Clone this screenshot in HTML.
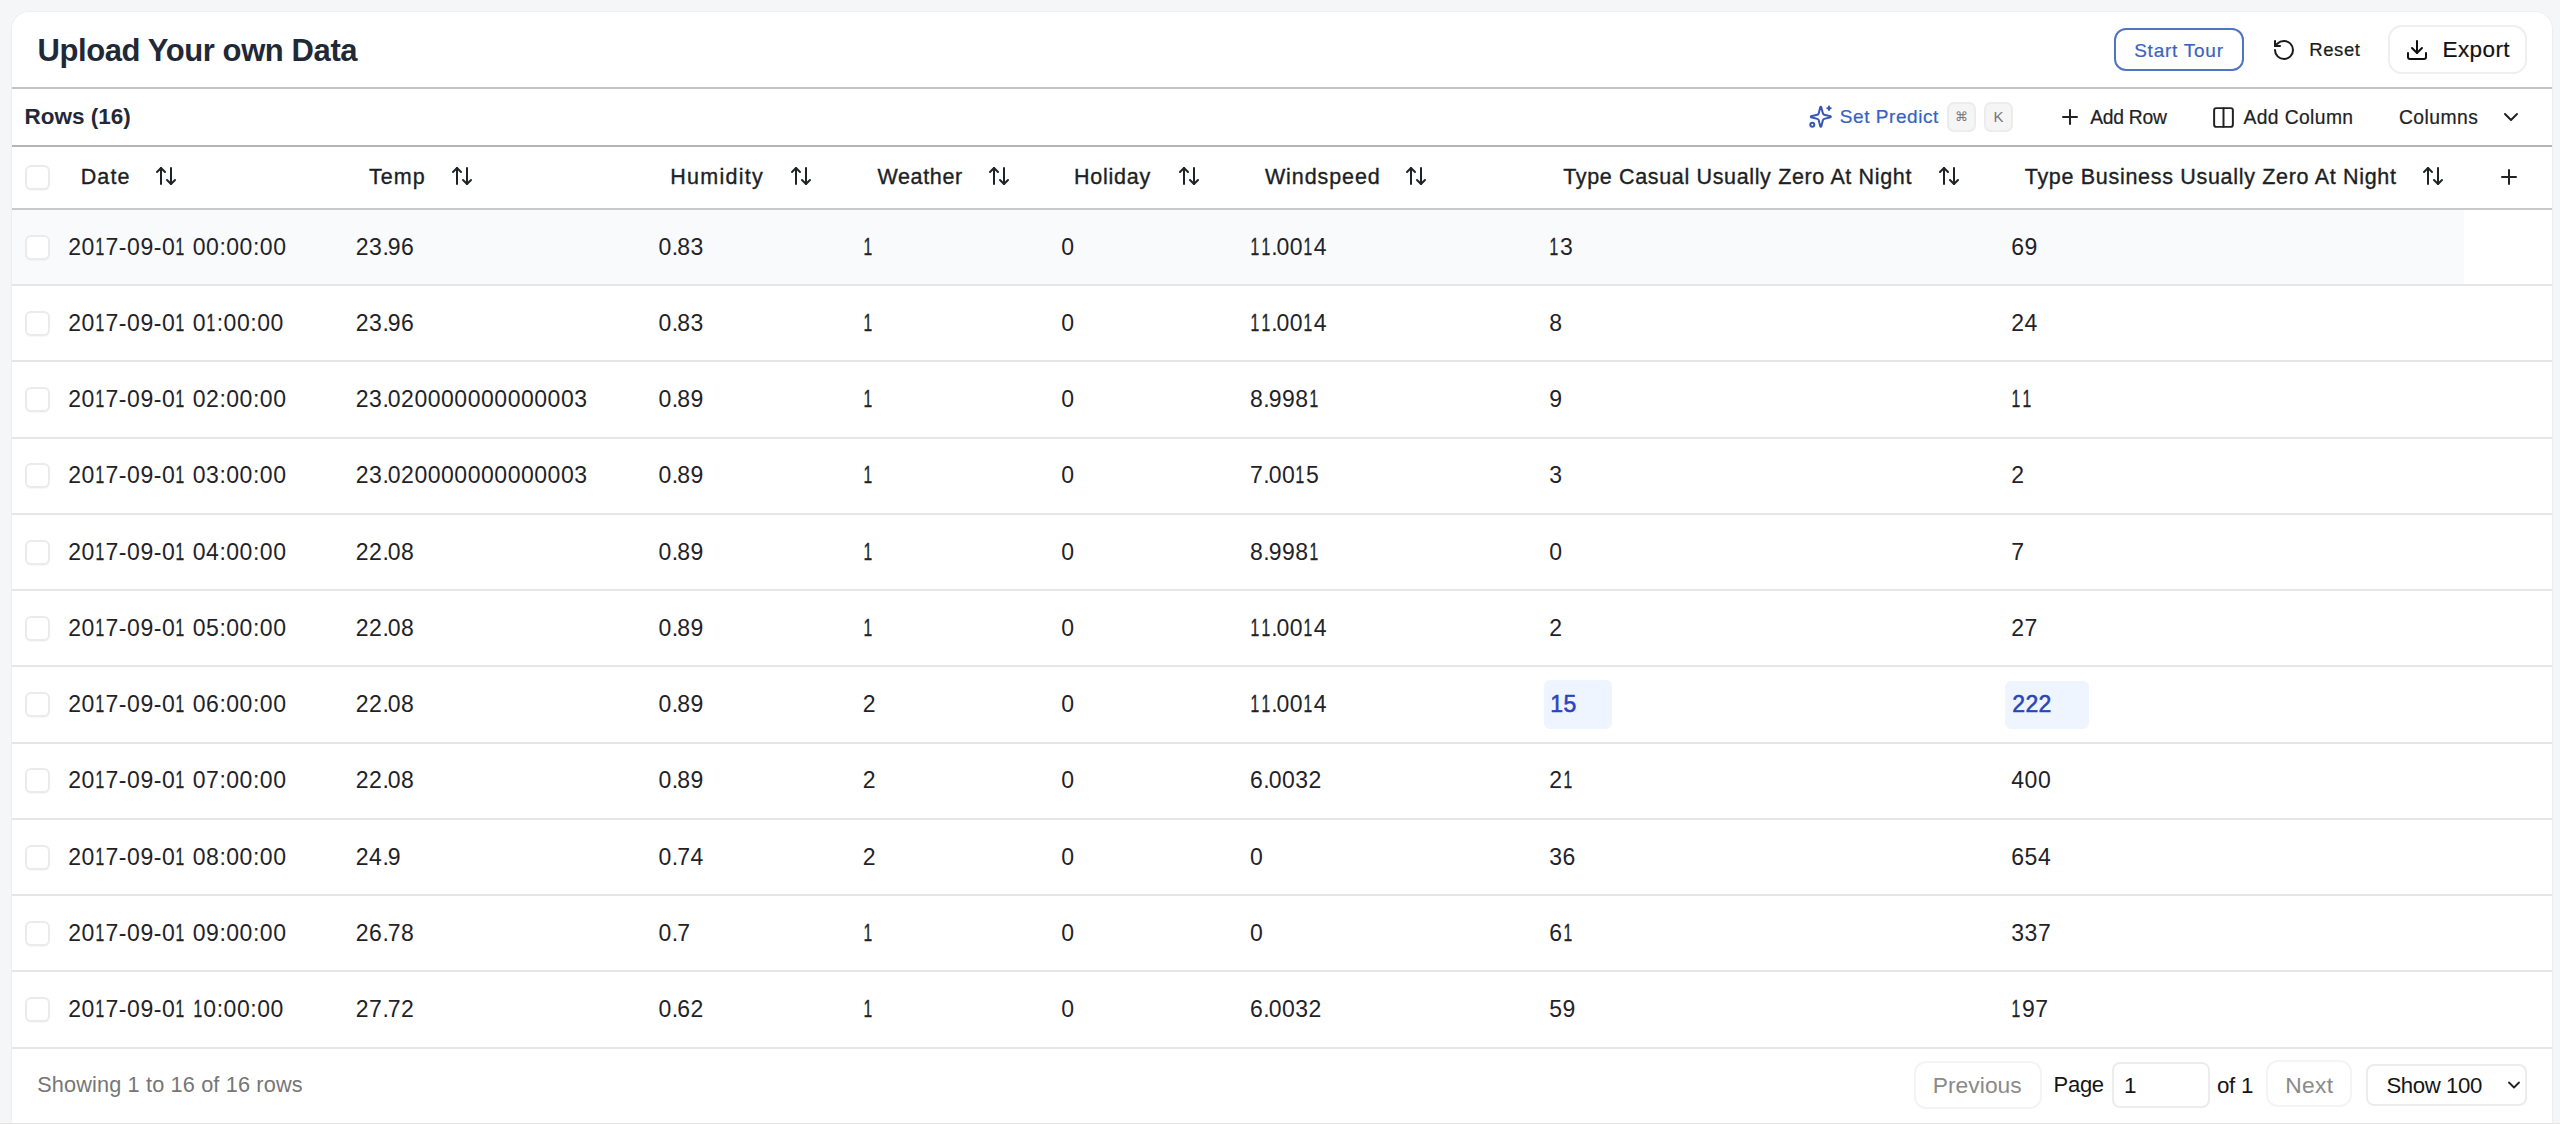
<!DOCTYPE html>
<html><head><meta charset="utf-8"><title>Upload Your own Data</title>
<style>
html,body{margin:0;padding:0;}
body{width:2560px;height:1124px;overflow:hidden;background:#f5f6f7;position:relative;font-family:"Liberation Sans",sans-serif;}
.card{position:absolute;left:12px;top:12px;width:2540px;height:1140px;background:#fff;border-radius:17px;
 box-shadow:0 0 0 1px rgba(0,0,0,0.022),0 1px 3px rgba(0,0,0,0.03);}
.bline{position:absolute;left:0;top:1123px;width:2560px;height:1px;background:#e4e4e4;}
.t{position:absolute;white-space:nowrap;}
.ic{position:absolute;}
.hl{position:absolute;height:1px;}
.cb{position:absolute;left:25px;width:21px;height:21px;border:2px solid #ebebeb;border-radius:6px;background:#fff;box-shadow:0 1px 1px rgba(0,0,0,0.035);}
.box{position:absolute;box-sizing:border-box;}
.o{display:inline-block;width:10.6px;}
.o i{display:inline-block;font-style:normal;letter-spacing:0;transform:translateX(0.6px) scaleX(0.68);transform-origin:0 0;-webkit-text-stroke:0.35px currentColor;}
</style></head><body>
<div class="card"></div>

<div class="t" style="left:37.40px;top:32.26px;font-size:31px;line-height:37px;letter-spacing:-0.4px;color:#1f2937;font-weight:700;">Upload Your own Data</div>
<div class="box" style="left:2114px;top:28px;width:130px;height:43px;border:2px solid #5173c3;border-radius:12px;"></div>
<div class="t" style="left:2134.20px;top:38.52px;font-size:19px;line-height:23px;letter-spacing:0.75px;color:#3a63c0;font-weight:400;-webkit-text-stroke:0.2px #3a63c0;">Start Tour</div>
<svg class="ic" style="left:2272px;top:38px" width="24" height="24" viewBox="0 0 24 24" fill="none" stroke="#1a1a1a" stroke-width="2" stroke-linecap="round" stroke-linejoin="round"><path d="M3 12a9 9 0 1 0 9-9 9.75 9.75 0 0 0-6.74 2.74L3 8"/><path d="M3 3v5h5"/></svg>
<div class="t" style="left:2309.20px;top:39.39px;font-size:18.5px;line-height:22px;letter-spacing:0.6px;color:#1a1a1a;font-weight:400;-webkit-text-stroke:0.2px #1a1a1a;">Reset</div>
<div class="box" style="left:2388px;top:25px;width:139px;height:49px;border:2px solid #efefef;border-radius:14px;"></div>
<svg class="ic" style="left:2405px;top:38px" width="24" height="24" viewBox="0 0 24 24" fill="none" stroke="#111" stroke-width="2" stroke-linecap="round" stroke-linejoin="round"><path d="M21 15v4a2 2 0 0 1-2 2H5a2 2 0 0 1-2-2v-4"/><polyline points="7 10 12 15 17 10"/><line x1="12" x2="12" y1="15" y2="3"/></svg>
<div class="t" style="left:2442.50px;top:36.20px;font-size:22.5px;line-height:27px;letter-spacing:0.4px;color:#111;font-weight:400;-webkit-text-stroke:0.2px #111;">Export</div>
<div class="box" style="left:12px;top:87px;width:2540px;height:2px;background:#c4c5c5"></div>
<div class="box" style="left:12px;top:145px;width:2540px;height:1.5px;background:#b4b6b5"></div>
<div class="t" style="left:24.50px;top:103.30px;font-size:22.5px;line-height:27px;letter-spacing:0px;color:#1f2937;font-weight:700;">Rows (16)</div>
<svg class="ic" style="left:1800px;top:100px" width="40" height="35" viewBox="1800 100 40 35" fill="none" stroke="#3556b4" stroke-width="2" stroke-linecap="round" stroke-linejoin="round"><path transform="translate(1808.8 104.8)" d="M9.937 15.5A2 2 0 0 0 8.5 14.063l-6.135-1.582a.5.5 0 0 1 0-.962L8.5 9.936A2 2 0 0 0 9.937 8.5l1.582-6.135a.5.5 0 0 1 .963 0L14.063 8.5A2 2 0 0 0 15.5 9.937l6.135 1.581a.5.5 0 0 1 0 .964L15.5 14.063a2 2 0 0 0-1.437 1.437l-1.582 6.135a.5.5 0 0 1-.963 0z"/><path d="M1829 106.5v3.4M1827.3 108.2h3.4"/><circle cx="1812.3" cy="124.8" r="2"/></svg>
<div class="t" style="left:1839.80px;top:105.42px;font-size:19px;line-height:23px;letter-spacing:0.55px;color:#3461c4;font-weight:400;-webkit-text-stroke:0.2px #3461c4;">Set Predict</div>
<div class="box" style="left:1947px;top:102px;width:29px;height:30px;border:2px solid #ececec;border-radius:7px;background:#f5f5f5"></div>
<div class="t" style="left:1954.50px;top:109.00px;font-size:13px;line-height:16px;letter-spacing:0px;color:#777;font-weight:400;">&#8984;</div>
<div class="box" style="left:1984px;top:102px;width:29px;height:30px;border:2px solid #ececec;border-radius:7px;background:#f5f5f5"></div>
<div class="t" style="left:1993.50px;top:107.80px;font-size:15px;line-height:18px;letter-spacing:0px;color:#777;font-weight:400;">K</div>
<svg class="ic" style="left:2058px;top:105px" width="24" height="24" viewBox="0 0 24 24" fill="none" stroke="#222" stroke-width="2" stroke-linecap="round" stroke-linejoin="round"><path d="M5 12h14"/><path d="M12 5v14"/></svg>
<div class="t" style="left:2090.20px;top:105.61px;font-size:19.3px;line-height:23px;letter-spacing:-0.25px;color:#222;font-weight:400;-webkit-text-stroke:0.2px #222;">Add Row</div>
<svg class="ic" style="left:2211px;top:104.5px" width="25" height="25" viewBox="0 0 24 24" fill="none" stroke="#222" stroke-width="1.9" stroke-linecap="round" stroke-linejoin="round"><rect width="18" height="18" x="3" y="3" rx="2"/><path d="M12 3v18"/></svg>
<div class="t" style="left:2243.40px;top:105.56px;font-size:19.3px;line-height:23px;letter-spacing:0.4px;color:#222;font-weight:400;-webkit-text-stroke:0.2px #222;">Add Column</div>
<div class="t" style="left:2399.00px;top:105.56px;font-size:19.3px;line-height:23px;letter-spacing:0.45px;color:#222;font-weight:400;-webkit-text-stroke:0.2px #222;">Columns</div>
<svg class="ic" style="left:2499px;top:105px" width="24" height="24" viewBox="0 0 24 24" fill="none" stroke="#222" stroke-width="2" stroke-linecap="round" stroke-linejoin="round"><path d="m6 9 6 6 6-6"/></svg>
<div class="cb" style="top:164.5px"></div>
<div class="t" style="left:80.70px;top:164.05px;font-size:21.5px;line-height:26px;letter-spacing:1.11px;color:#1c1f24;font-weight:400;-webkit-text-stroke:0.35px #1c1f24;">Date</div>
<svg class="ic" style="left:154.2px;top:164px" width="24" height="24" viewBox="0 0 24 24" fill="none" stroke="#1f2328" stroke-width="2" stroke-linecap="round" stroke-linejoin="round"><path d="m21 16-4 4-4-4"/><path d="M17 20V4"/><path d="m3 8 4-4 4 4"/><path d="M7 4v16"/></svg>
<div class="t" style="left:369.00px;top:164.05px;font-size:21.5px;line-height:26px;letter-spacing:1.03px;color:#1c1f24;font-weight:400;-webkit-text-stroke:0.35px #1c1f24;">Temp</div>
<svg class="ic" style="left:449.7px;top:164px" width="24" height="24" viewBox="0 0 24 24" fill="none" stroke="#1f2328" stroke-width="2" stroke-linecap="round" stroke-linejoin="round"><path d="m21 16-4 4-4-4"/><path d="M17 20V4"/><path d="m3 8 4-4 4 4"/><path d="M7 4v16"/></svg>
<div class="t" style="left:670.30px;top:164.05px;font-size:21.5px;line-height:26px;letter-spacing:1.27px;color:#1c1f24;font-weight:400;-webkit-text-stroke:0.35px #1c1f24;">Humidity</div>
<svg class="ic" style="left:788.8px;top:164px" width="24" height="24" viewBox="0 0 24 24" fill="none" stroke="#1f2328" stroke-width="2" stroke-linecap="round" stroke-linejoin="round"><path d="m21 16-4 4-4-4"/><path d="M17 20V4"/><path d="m3 8 4-4 4 4"/><path d="M7 4v16"/></svg>
<div class="t" style="left:877.40px;top:164.05px;font-size:21.5px;line-height:26px;letter-spacing:0.66px;color:#1c1f24;font-weight:400;-webkit-text-stroke:0.35px #1c1f24;">Weather</div>
<svg class="ic" style="left:987px;top:164px" width="24" height="24" viewBox="0 0 24 24" fill="none" stroke="#1f2328" stroke-width="2" stroke-linecap="round" stroke-linejoin="round"><path d="m21 16-4 4-4-4"/><path d="M17 20V4"/><path d="m3 8 4-4 4 4"/><path d="M7 4v16"/></svg>
<div class="t" style="left:1073.90px;top:164.05px;font-size:21.5px;line-height:26px;letter-spacing:0.79px;color:#1c1f24;font-weight:400;-webkit-text-stroke:0.35px #1c1f24;">Holiday</div>
<svg class="ic" style="left:1177px;top:164px" width="24" height="24" viewBox="0 0 24 24" fill="none" stroke="#1f2328" stroke-width="2" stroke-linecap="round" stroke-linejoin="round"><path d="m21 16-4 4-4-4"/><path d="M17 20V4"/><path d="m3 8 4-4 4 4"/><path d="M7 4v16"/></svg>
<div class="t" style="left:1264.90px;top:164.05px;font-size:21.5px;line-height:26px;letter-spacing:0.91px;color:#1c1f24;font-weight:400;-webkit-text-stroke:0.35px #1c1f24;">Windspeed</div>
<svg class="ic" style="left:1404.4px;top:164px" width="24" height="24" viewBox="0 0 24 24" fill="none" stroke="#1f2328" stroke-width="2" stroke-linecap="round" stroke-linejoin="round"><path d="m21 16-4 4-4-4"/><path d="M17 20V4"/><path d="m3 8 4-4 4 4"/><path d="M7 4v16"/></svg>
<div class="t" style="left:1563.20px;top:164.05px;font-size:21.5px;line-height:26px;letter-spacing:0.65px;color:#1c1f24;font-weight:400;-webkit-text-stroke:0.35px #1c1f24;">Type Casual Usually Zero At Night</div>
<svg class="ic" style="left:1936.8px;top:164px" width="24" height="24" viewBox="0 0 24 24" fill="none" stroke="#1f2328" stroke-width="2" stroke-linecap="round" stroke-linejoin="round"><path d="m21 16-4 4-4-4"/><path d="M17 20V4"/><path d="m3 8 4-4 4 4"/><path d="M7 4v16"/></svg>
<div class="t" style="left:2024.80px;top:164.05px;font-size:21.5px;line-height:26px;letter-spacing:0.69px;color:#1c1f24;font-weight:400;-webkit-text-stroke:0.35px #1c1f24;">Type Business Usually Zero At Night</div>
<svg class="ic" style="left:2421px;top:164px" width="24" height="24" viewBox="0 0 24 24" fill="none" stroke="#1f2328" stroke-width="2" stroke-linecap="round" stroke-linejoin="round"><path d="m21 16-4 4-4-4"/><path d="M17 20V4"/><path d="m3 8 4-4 4 4"/><path d="M7 4v16"/></svg>
<svg class="ic" style="left:2496.5px;top:164.5px" width="24" height="24" viewBox="0 0 24 24" fill="none" stroke="#222" stroke-width="2" stroke-linecap="round" stroke-linejoin="round"><path d="M5 12h14"/><path d="M12 5v14"/></svg>
<div class="box" style="left:12px;top:207.5px;width:2540px;height:2px;background:#c8c9cb"></div>
<div class="box" style="left:12px;top:209.5px;width:2452px;height:75px;background:#f9fafb"></div>
<div class="box" style="left:12px;top:284.00px;width:2540px;height:2px;background:#e6e6e8"></div>
<div class="cb" style="top:234.50px"></div>
<div class="t" style="left:68.30px;top:232.53px;font-size:23px;line-height:28px;letter-spacing:0.53px;color:#1f2328;font-weight:400;">20<span class="o"><i>1</i></span>7-09-0<span class="o"><i>1</i></span> 00:00:00</div>
<div class="t" style="left:355.80px;top:232.53px;font-size:23px;line-height:28px;letter-spacing:0.53px;color:#1f2328;font-weight:400;">23<span style="letter-spacing:-1.1px">.</span>96</div>
<div class="t" style="left:658.50px;top:232.53px;font-size:23px;line-height:28px;letter-spacing:0.53px;color:#1f2328;font-weight:400;">0<span style="letter-spacing:-1.1px">.</span>83</div>
<div class="t" style="left:862.80px;top:232.53px;font-size:23px;line-height:28px;letter-spacing:0.53px;color:#1f2328;font-weight:400;"><span class="o"><i>1</i></span></div>
<div class="t" style="left:1061.30px;top:232.53px;font-size:23px;line-height:28px;letter-spacing:0.53px;color:#1f2328;font-weight:400;">0</div>
<div class="t" style="left:1250.00px;top:232.53px;font-size:23px;line-height:28px;letter-spacing:0.53px;color:#1f2328;font-weight:400;"><span class="o"><i>1</i></span><span class="o"><i>1</i></span><span style="letter-spacing:-1.1px">.</span>00<span class="o"><i>1</i></span>4</div>
<div class="t" style="left:1549.30px;top:232.53px;font-size:23px;line-height:28px;letter-spacing:0.53px;color:#1f2328;font-weight:400;"><span class="o"><i>1</i></span>3</div>
<div class="t" style="left:2011.30px;top:232.53px;font-size:23px;line-height:28px;letter-spacing:0.53px;color:#1f2328;font-weight:400;">69</div>
<div class="box" style="left:12px;top:360.25px;width:2540px;height:2px;background:#e6e6e8"></div>
<div class="cb" style="top:310.75px"></div>
<div class="t" style="left:68.30px;top:308.78px;font-size:23px;line-height:28px;letter-spacing:0.53px;color:#1f2328;font-weight:400;">20<span class="o"><i>1</i></span>7-09-0<span class="o"><i>1</i></span> 0<span class="o"><i>1</i></span>:00:00</div>
<div class="t" style="left:355.80px;top:308.78px;font-size:23px;line-height:28px;letter-spacing:0.53px;color:#1f2328;font-weight:400;">23<span style="letter-spacing:-1.1px">.</span>96</div>
<div class="t" style="left:658.50px;top:308.78px;font-size:23px;line-height:28px;letter-spacing:0.53px;color:#1f2328;font-weight:400;">0<span style="letter-spacing:-1.1px">.</span>83</div>
<div class="t" style="left:862.80px;top:308.78px;font-size:23px;line-height:28px;letter-spacing:0.53px;color:#1f2328;font-weight:400;"><span class="o"><i>1</i></span></div>
<div class="t" style="left:1061.30px;top:308.78px;font-size:23px;line-height:28px;letter-spacing:0.53px;color:#1f2328;font-weight:400;">0</div>
<div class="t" style="left:1250.00px;top:308.78px;font-size:23px;line-height:28px;letter-spacing:0.53px;color:#1f2328;font-weight:400;"><span class="o"><i>1</i></span><span class="o"><i>1</i></span><span style="letter-spacing:-1.1px">.</span>00<span class="o"><i>1</i></span>4</div>
<div class="t" style="left:1549.30px;top:308.78px;font-size:23px;line-height:28px;letter-spacing:0.53px;color:#1f2328;font-weight:400;">8</div>
<div class="t" style="left:2011.30px;top:308.78px;font-size:23px;line-height:28px;letter-spacing:0.53px;color:#1f2328;font-weight:400;">24</div>
<div class="box" style="left:12px;top:436.50px;width:2540px;height:2px;background:#e6e6e8"></div>
<div class="cb" style="top:387.00px"></div>
<div class="t" style="left:68.30px;top:385.03px;font-size:23px;line-height:28px;letter-spacing:0.53px;color:#1f2328;font-weight:400;">20<span class="o"><i>1</i></span>7-09-0<span class="o"><i>1</i></span> 02:00:00</div>
<div class="t" style="left:355.80px;top:385.03px;font-size:23px;line-height:28px;letter-spacing:0.53px;color:#1f2328;font-weight:400;">23<span style="letter-spacing:-1.1px">.</span>020000000000003</div>
<div class="t" style="left:658.50px;top:385.03px;font-size:23px;line-height:28px;letter-spacing:0.53px;color:#1f2328;font-weight:400;">0<span style="letter-spacing:-1.1px">.</span>89</div>
<div class="t" style="left:862.80px;top:385.03px;font-size:23px;line-height:28px;letter-spacing:0.53px;color:#1f2328;font-weight:400;"><span class="o"><i>1</i></span></div>
<div class="t" style="left:1061.30px;top:385.03px;font-size:23px;line-height:28px;letter-spacing:0.53px;color:#1f2328;font-weight:400;">0</div>
<div class="t" style="left:1250.00px;top:385.03px;font-size:23px;line-height:28px;letter-spacing:0.53px;color:#1f2328;font-weight:400;">8<span style="letter-spacing:-1.1px">.</span>998<span class="o"><i>1</i></span></div>
<div class="t" style="left:1549.30px;top:385.03px;font-size:23px;line-height:28px;letter-spacing:0.53px;color:#1f2328;font-weight:400;">9</div>
<div class="t" style="left:2011.30px;top:385.03px;font-size:23px;line-height:28px;letter-spacing:0.53px;color:#1f2328;font-weight:400;"><span class="o"><i>1</i></span><span class="o"><i>1</i></span></div>
<div class="box" style="left:12px;top:512.75px;width:2540px;height:2px;background:#e6e6e8"></div>
<div class="cb" style="top:463.25px"></div>
<div class="t" style="left:68.30px;top:461.28px;font-size:23px;line-height:28px;letter-spacing:0.53px;color:#1f2328;font-weight:400;">20<span class="o"><i>1</i></span>7-09-0<span class="o"><i>1</i></span> 03:00:00</div>
<div class="t" style="left:355.80px;top:461.28px;font-size:23px;line-height:28px;letter-spacing:0.53px;color:#1f2328;font-weight:400;">23<span style="letter-spacing:-1.1px">.</span>020000000000003</div>
<div class="t" style="left:658.50px;top:461.28px;font-size:23px;line-height:28px;letter-spacing:0.53px;color:#1f2328;font-weight:400;">0<span style="letter-spacing:-1.1px">.</span>89</div>
<div class="t" style="left:862.80px;top:461.28px;font-size:23px;line-height:28px;letter-spacing:0.53px;color:#1f2328;font-weight:400;"><span class="o"><i>1</i></span></div>
<div class="t" style="left:1061.30px;top:461.28px;font-size:23px;line-height:28px;letter-spacing:0.53px;color:#1f2328;font-weight:400;">0</div>
<div class="t" style="left:1250.00px;top:461.28px;font-size:23px;line-height:28px;letter-spacing:0.53px;color:#1f2328;font-weight:400;">7<span style="letter-spacing:-1.1px">.</span>00<span class="o"><i>1</i></span>5</div>
<div class="t" style="left:1549.30px;top:461.28px;font-size:23px;line-height:28px;letter-spacing:0.53px;color:#1f2328;font-weight:400;">3</div>
<div class="t" style="left:2011.30px;top:461.28px;font-size:23px;line-height:28px;letter-spacing:0.53px;color:#1f2328;font-weight:400;">2</div>
<div class="box" style="left:12px;top:589.00px;width:2540px;height:2px;background:#e6e6e8"></div>
<div class="cb" style="top:539.50px"></div>
<div class="t" style="left:68.30px;top:537.53px;font-size:23px;line-height:28px;letter-spacing:0.53px;color:#1f2328;font-weight:400;">20<span class="o"><i>1</i></span>7-09-0<span class="o"><i>1</i></span> 04:00:00</div>
<div class="t" style="left:355.80px;top:537.53px;font-size:23px;line-height:28px;letter-spacing:0.53px;color:#1f2328;font-weight:400;">22<span style="letter-spacing:-1.1px">.</span>08</div>
<div class="t" style="left:658.50px;top:537.53px;font-size:23px;line-height:28px;letter-spacing:0.53px;color:#1f2328;font-weight:400;">0<span style="letter-spacing:-1.1px">.</span>89</div>
<div class="t" style="left:862.80px;top:537.53px;font-size:23px;line-height:28px;letter-spacing:0.53px;color:#1f2328;font-weight:400;"><span class="o"><i>1</i></span></div>
<div class="t" style="left:1061.30px;top:537.53px;font-size:23px;line-height:28px;letter-spacing:0.53px;color:#1f2328;font-weight:400;">0</div>
<div class="t" style="left:1250.00px;top:537.53px;font-size:23px;line-height:28px;letter-spacing:0.53px;color:#1f2328;font-weight:400;">8<span style="letter-spacing:-1.1px">.</span>998<span class="o"><i>1</i></span></div>
<div class="t" style="left:1549.30px;top:537.53px;font-size:23px;line-height:28px;letter-spacing:0.53px;color:#1f2328;font-weight:400;">0</div>
<div class="t" style="left:2011.30px;top:537.53px;font-size:23px;line-height:28px;letter-spacing:0.53px;color:#1f2328;font-weight:400;">7</div>
<div class="box" style="left:12px;top:665.25px;width:2540px;height:2px;background:#e6e6e8"></div>
<div class="cb" style="top:615.75px"></div>
<div class="t" style="left:68.30px;top:613.78px;font-size:23px;line-height:28px;letter-spacing:0.53px;color:#1f2328;font-weight:400;">20<span class="o"><i>1</i></span>7-09-0<span class="o"><i>1</i></span> 05:00:00</div>
<div class="t" style="left:355.80px;top:613.78px;font-size:23px;line-height:28px;letter-spacing:0.53px;color:#1f2328;font-weight:400;">22<span style="letter-spacing:-1.1px">.</span>08</div>
<div class="t" style="left:658.50px;top:613.78px;font-size:23px;line-height:28px;letter-spacing:0.53px;color:#1f2328;font-weight:400;">0<span style="letter-spacing:-1.1px">.</span>89</div>
<div class="t" style="left:862.80px;top:613.78px;font-size:23px;line-height:28px;letter-spacing:0.53px;color:#1f2328;font-weight:400;"><span class="o"><i>1</i></span></div>
<div class="t" style="left:1061.30px;top:613.78px;font-size:23px;line-height:28px;letter-spacing:0.53px;color:#1f2328;font-weight:400;">0</div>
<div class="t" style="left:1250.00px;top:613.78px;font-size:23px;line-height:28px;letter-spacing:0.53px;color:#1f2328;font-weight:400;"><span class="o"><i>1</i></span><span class="o"><i>1</i></span><span style="letter-spacing:-1.1px">.</span>00<span class="o"><i>1</i></span>4</div>
<div class="t" style="left:1549.30px;top:613.78px;font-size:23px;line-height:28px;letter-spacing:0.53px;color:#1f2328;font-weight:400;">2</div>
<div class="t" style="left:2011.30px;top:613.78px;font-size:23px;line-height:28px;letter-spacing:0.53px;color:#1f2328;font-weight:400;">27</div>
<div class="box" style="left:12px;top:741.50px;width:2540px;height:2px;background:#e6e6e8"></div>
<div class="cb" style="top:692.00px"></div>
<div class="t" style="left:68.30px;top:690.03px;font-size:23px;line-height:28px;letter-spacing:0.53px;color:#1f2328;font-weight:400;">20<span class="o"><i>1</i></span>7-09-0<span class="o"><i>1</i></span> 06:00:00</div>
<div class="t" style="left:355.80px;top:690.03px;font-size:23px;line-height:28px;letter-spacing:0.53px;color:#1f2328;font-weight:400;">22<span style="letter-spacing:-1.1px">.</span>08</div>
<div class="t" style="left:658.50px;top:690.03px;font-size:23px;line-height:28px;letter-spacing:0.53px;color:#1f2328;font-weight:400;">0<span style="letter-spacing:-1.1px">.</span>89</div>
<div class="t" style="left:862.80px;top:690.03px;font-size:23px;line-height:28px;letter-spacing:0.53px;color:#1f2328;font-weight:400;">2</div>
<div class="t" style="left:1061.30px;top:690.03px;font-size:23px;line-height:28px;letter-spacing:0.53px;color:#1f2328;font-weight:400;">0</div>
<div class="t" style="left:1250.00px;top:690.03px;font-size:23px;line-height:28px;letter-spacing:0.53px;color:#1f2328;font-weight:400;"><span class="o"><i>1</i></span><span class="o"><i>1</i></span><span style="letter-spacing:-1.1px">.</span>00<span class="o"><i>1</i></span>4</div>
<div class="box" style="left:1543.7px;top:680px;width:68px;height:48.5px;background:#eff5fe;border-radius:6px"></div>
<div class="t" style="left:1550.30px;top:690.03px;font-size:23px;line-height:28px;letter-spacing:0.3px;color:#2a45b8;font-weight:400;-webkit-text-stroke:0.55px #2a45b8;">15</div>
<div class="box" style="left:2004.6px;top:680.5px;width:84px;height:48px;background:#eff5fe;border-radius:6px"></div>
<div class="t" style="left:2012.30px;top:690.03px;font-size:23px;line-height:28px;letter-spacing:0.3px;color:#2a45b8;font-weight:400;-webkit-text-stroke:0.55px #2a45b8;">222</div>
<div class="box" style="left:12px;top:817.75px;width:2540px;height:2px;background:#e6e6e8"></div>
<div class="cb" style="top:768.25px"></div>
<div class="t" style="left:68.30px;top:766.28px;font-size:23px;line-height:28px;letter-spacing:0.53px;color:#1f2328;font-weight:400;">20<span class="o"><i>1</i></span>7-09-0<span class="o"><i>1</i></span> 07:00:00</div>
<div class="t" style="left:355.80px;top:766.28px;font-size:23px;line-height:28px;letter-spacing:0.53px;color:#1f2328;font-weight:400;">22<span style="letter-spacing:-1.1px">.</span>08</div>
<div class="t" style="left:658.50px;top:766.28px;font-size:23px;line-height:28px;letter-spacing:0.53px;color:#1f2328;font-weight:400;">0<span style="letter-spacing:-1.1px">.</span>89</div>
<div class="t" style="left:862.80px;top:766.28px;font-size:23px;line-height:28px;letter-spacing:0.53px;color:#1f2328;font-weight:400;">2</div>
<div class="t" style="left:1061.30px;top:766.28px;font-size:23px;line-height:28px;letter-spacing:0.53px;color:#1f2328;font-weight:400;">0</div>
<div class="t" style="left:1250.00px;top:766.28px;font-size:23px;line-height:28px;letter-spacing:0.53px;color:#1f2328;font-weight:400;">6<span style="letter-spacing:-1.1px">.</span>0032</div>
<div class="t" style="left:1549.30px;top:766.28px;font-size:23px;line-height:28px;letter-spacing:0.53px;color:#1f2328;font-weight:400;">2<span class="o"><i>1</i></span></div>
<div class="t" style="left:2011.30px;top:766.28px;font-size:23px;line-height:28px;letter-spacing:0.53px;color:#1f2328;font-weight:400;">400</div>
<div class="box" style="left:12px;top:894.00px;width:2540px;height:2px;background:#e6e6e8"></div>
<div class="cb" style="top:844.50px"></div>
<div class="t" style="left:68.30px;top:842.53px;font-size:23px;line-height:28px;letter-spacing:0.53px;color:#1f2328;font-weight:400;">20<span class="o"><i>1</i></span>7-09-0<span class="o"><i>1</i></span> 08:00:00</div>
<div class="t" style="left:355.80px;top:842.53px;font-size:23px;line-height:28px;letter-spacing:0.53px;color:#1f2328;font-weight:400;">24<span style="letter-spacing:-1.1px">.</span>9</div>
<div class="t" style="left:658.50px;top:842.53px;font-size:23px;line-height:28px;letter-spacing:0.53px;color:#1f2328;font-weight:400;">0<span style="letter-spacing:-1.1px">.</span>74</div>
<div class="t" style="left:862.80px;top:842.53px;font-size:23px;line-height:28px;letter-spacing:0.53px;color:#1f2328;font-weight:400;">2</div>
<div class="t" style="left:1061.30px;top:842.53px;font-size:23px;line-height:28px;letter-spacing:0.53px;color:#1f2328;font-weight:400;">0</div>
<div class="t" style="left:1250.00px;top:842.53px;font-size:23px;line-height:28px;letter-spacing:0.53px;color:#1f2328;font-weight:400;">0</div>
<div class="t" style="left:1549.30px;top:842.53px;font-size:23px;line-height:28px;letter-spacing:0.53px;color:#1f2328;font-weight:400;">36</div>
<div class="t" style="left:2011.30px;top:842.53px;font-size:23px;line-height:28px;letter-spacing:0.53px;color:#1f2328;font-weight:400;">654</div>
<div class="box" style="left:12px;top:970.25px;width:2540px;height:2px;background:#e6e6e8"></div>
<div class="cb" style="top:920.75px"></div>
<div class="t" style="left:68.30px;top:918.78px;font-size:23px;line-height:28px;letter-spacing:0.53px;color:#1f2328;font-weight:400;">20<span class="o"><i>1</i></span>7-09-0<span class="o"><i>1</i></span> 09:00:00</div>
<div class="t" style="left:355.80px;top:918.78px;font-size:23px;line-height:28px;letter-spacing:0.53px;color:#1f2328;font-weight:400;">26<span style="letter-spacing:-1.1px">.</span>78</div>
<div class="t" style="left:658.50px;top:918.78px;font-size:23px;line-height:28px;letter-spacing:0.53px;color:#1f2328;font-weight:400;">0<span style="letter-spacing:-1.1px">.</span>7</div>
<div class="t" style="left:862.80px;top:918.78px;font-size:23px;line-height:28px;letter-spacing:0.53px;color:#1f2328;font-weight:400;"><span class="o"><i>1</i></span></div>
<div class="t" style="left:1061.30px;top:918.78px;font-size:23px;line-height:28px;letter-spacing:0.53px;color:#1f2328;font-weight:400;">0</div>
<div class="t" style="left:1250.00px;top:918.78px;font-size:23px;line-height:28px;letter-spacing:0.53px;color:#1f2328;font-weight:400;">0</div>
<div class="t" style="left:1549.30px;top:918.78px;font-size:23px;line-height:28px;letter-spacing:0.53px;color:#1f2328;font-weight:400;">6<span class="o"><i>1</i></span></div>
<div class="t" style="left:2011.30px;top:918.78px;font-size:23px;line-height:28px;letter-spacing:0.53px;color:#1f2328;font-weight:400;">337</div>
<div class="box" style="left:12px;top:1046.50px;width:2540px;height:2px;background:#e6e6e8"></div>
<div class="cb" style="top:997.00px"></div>
<div class="t" style="left:68.30px;top:995.03px;font-size:23px;line-height:28px;letter-spacing:0.53px;color:#1f2328;font-weight:400;">20<span class="o"><i>1</i></span>7-09-0<span class="o"><i>1</i></span> <span class="o"><i>1</i></span>0:00:00</div>
<div class="t" style="left:355.80px;top:995.03px;font-size:23px;line-height:28px;letter-spacing:0.53px;color:#1f2328;font-weight:400;">27<span style="letter-spacing:-1.1px">.</span>72</div>
<div class="t" style="left:658.50px;top:995.03px;font-size:23px;line-height:28px;letter-spacing:0.53px;color:#1f2328;font-weight:400;">0<span style="letter-spacing:-1.1px">.</span>62</div>
<div class="t" style="left:862.80px;top:995.03px;font-size:23px;line-height:28px;letter-spacing:0.53px;color:#1f2328;font-weight:400;"><span class="o"><i>1</i></span></div>
<div class="t" style="left:1061.30px;top:995.03px;font-size:23px;line-height:28px;letter-spacing:0.53px;color:#1f2328;font-weight:400;">0</div>
<div class="t" style="left:1250.00px;top:995.03px;font-size:23px;line-height:28px;letter-spacing:0.53px;color:#1f2328;font-weight:400;">6<span style="letter-spacing:-1.1px">.</span>0032</div>
<div class="t" style="left:1549.30px;top:995.03px;font-size:23px;line-height:28px;letter-spacing:0.53px;color:#1f2328;font-weight:400;">59</div>
<div class="t" style="left:2011.30px;top:995.03px;font-size:23px;line-height:28px;letter-spacing:0.53px;color:#1f2328;font-weight:400;"><span class="o"><i>1</i></span>97</div>
<div class="t" style="left:37.20px;top:1071.98px;font-size:21.7px;line-height:26px;letter-spacing:0.15px;color:#767676;font-weight:400;">Showing 1 to 16 of 16 rows</div>
<div class="box" style="left:1914px;top:1060.5px;width:128px;height:48.5px;border:2px solid #f4f4f4;border-radius:12px;"></div>
<div class="t" style="left:1932.70px;top:1071.60px;font-size:22.8px;line-height:27px;letter-spacing:0.05px;color:#8a8a8a;font-weight:400;">Previous</div>
<div class="t" style="left:2053.60px;top:1072.38px;font-size:22px;line-height:26px;letter-spacing:-0.3px;color:#151515;font-weight:400;">Page</div>
<div class="box" style="left:2111.7px;top:1062.4px;width:98px;height:45.3px;border:2px solid #ececec;border-radius:8px;"></div>
<div class="t" style="left:2124.00px;top:1071.70px;font-size:22.5px;line-height:27px;letter-spacing:0px;color:#151515;font-weight:400;">1</div>
<div class="t" style="left:2217.00px;top:1071.77px;font-size:22.3px;line-height:27px;letter-spacing:-0.3px;color:#151515;font-weight:400;">of 1</div>
<div class="box" style="left:2266.3px;top:1060.3px;width:86px;height:47px;border:2px solid #f4f4f4;border-radius:12px;"></div>
<div class="t" style="left:2285.20px;top:1071.60px;font-size:22.8px;line-height:27px;letter-spacing:0.3px;color:#8a8a8a;font-weight:400;">Next</div>
<div class="box" style="left:2366.3px;top:1064px;width:160.4px;height:42.3px;border:2px solid #ececec;border-radius:8px;"></div>
<div class="t" style="left:2386.40px;top:1071.81px;font-size:22.2px;line-height:27px;letter-spacing:-0.4px;color:#151515;font-weight:400;">Show 100</div>
<svg class="ic" style="left:2504px;top:1075px" width="20" height="20" viewBox="0 0 24 24" fill="none" stroke="#222" stroke-width="2.2" stroke-linecap="round" stroke-linejoin="round"><path d="m6 9 6 6 6-6"/></svg>
<div class="bline"></div>
</body></html>
